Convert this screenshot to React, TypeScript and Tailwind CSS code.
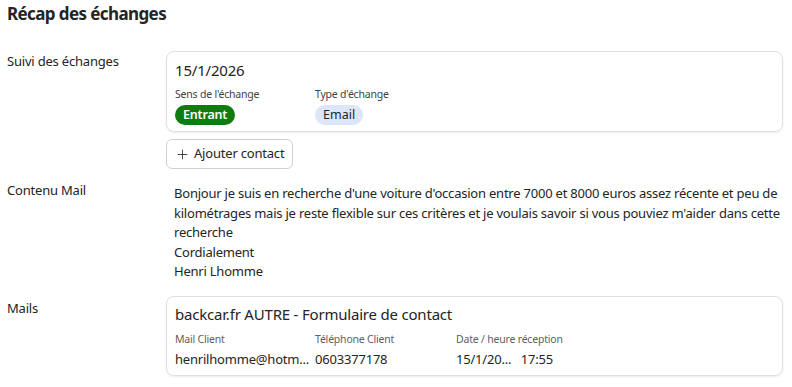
import { Plus } from "lucide-react"

const font = { fontFamily: '"Segoe UI", "Noto Sans", "Open Sans", sans-serif' }

const mailLines = [
  "Bonjour je suis en recherche d'une voiture d'occasion entre 7000 et 8000 euros assez récente et peu de",
  "kilométrages mais je reste flexible sur ces critères et je voulais savoir si vous pouviez m'aider dans cette",
  "recherche",
  "Cordialement",
  "Henri Lhomme",
]

function Row({ label, children, className = "", labelClass = "" }: { label: string; children: React.ReactNode; className?: string; labelClass?: string }) {
  return (
    <div className={`grid grid-cols-[159px_617px] ${className}`}>
      <div className={`text-[13px] leading-5 tracking-[-0.2px] text-[#242424] ${labelClass}`}>{label}</div>
      <div>{children}</div>
    </div>
  )
}

export default function App() {
  return (
    <div className="w-[792px] h-[387px] bg-white pl-[7px] text-[#242424] overflow-hidden" style={font}>
      <h1 className="pt-[2px] text-[17px] font-bold leading-6 tracking-[-0.6px]">Récap des échanges</h1>

      <Row label="Suivi des échanges" className="mt-[25px]">
        <div className="rounded-lg border border-[#e0e0e0] px-2 pt-[6px] pb-[6px] shadow-[0_1px_2px_rgba(0,0,0,0.08)]">
          <div className="text-[15px] leading-6 tracking-[-0.2px]">15/1/2026</div>
          <div className="mt-[5px] flex">
            <div className="w-[140px]">
              <div className="text-[10.5px] leading-[14px] tracking-[-0.2px] text-[#424242]">Sens de l'échange</div>
              <span className="mt-[1px] inline-block rounded-full bg-[#107c10] px-2 text-[12.5px] leading-5 font-semibold tracking-[-0.2px] text-white">
                Entrant
              </span>
            </div>
            <div>
              <div className="text-[10.5px] leading-[14px] tracking-[-0.2px] text-[#424242]">Type d'échange</div>
              <span className="mt-[1px] inline-block rounded-full bg-[#dbe6fb] px-2 text-[12.5px] leading-5 text-[#242424]">
                Email
              </span>
            </div>
          </div>
        </div>
        <button className="mt-[7px] flex h-[30px] items-center gap-1 rounded-md border border-[#d1d1d1] pl-2 pr-2 text-[13px] tracking-[-0.2px] text-[#242424]">
          <Plus size={15} strokeWidth={1.3} />
          Ajouter contact
        </button>
      </Row>

      <Row label="Contenu Mail" className="mt-[11px]">
        <div className="pl-2 pt-[4px] text-[13px] leading-[19.5px] tracking-[-0.22px]">
          {mailLines.map((l) => (
            <div key={l} className="whitespace-nowrap">{l}</div>
          ))}
        </div>
      </Row>

      <Row label="Mails" className="mt-[14px]" labelClass="pt-[2px]">
        <div className="rounded-lg border border-[#e0e0e0] px-2 pt-[7px] pb-[6px] shadow-[0_1px_2px_rgba(0,0,0,0.08)]">
          <div className="text-[15px] leading-5 tracking-[-0.2px]">backcar.fr AUTRE - Formulaire de contact</div>
          <div className="mt-[8px] grid grid-cols-[140px_141px_160px] text-[13px] tracking-[-0.2px]">
            <div className="text-[10.5px] leading-[14px] text-[#616161]">Mail Client</div>
            <div className="text-[10.5px] leading-[14px] text-[#616161]">Téléphone Client</div>
            <div className="text-[10.5px] leading-[14px] text-[#616161]">Date / heure réception</div>
            <div className="mt-[3px] leading-5">henrilhomme@hotm...</div>
            <div className="mt-[3px] leading-5">0603377178</div>
            <div className="mt-[3px] leading-5">15/1/20...&nbsp;&nbsp;&nbsp;17:55</div>
          </div>
        </div>
      </Row>
    </div>
  )
}
